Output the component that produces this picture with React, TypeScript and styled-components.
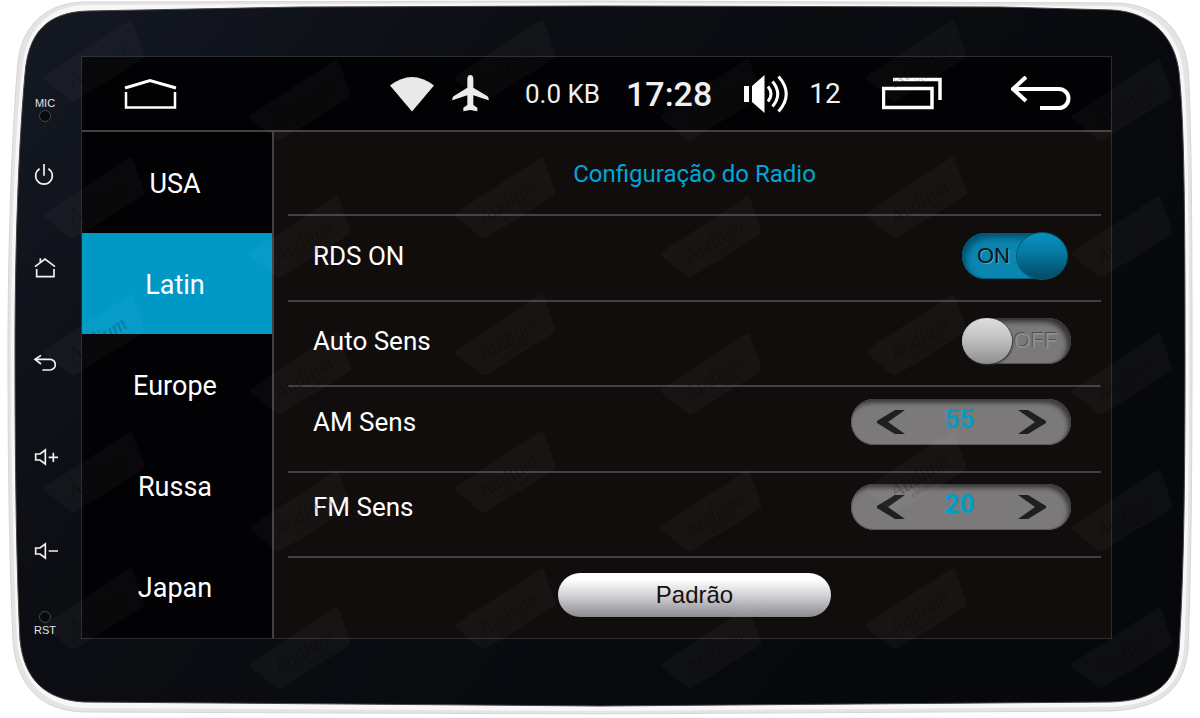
import React, { useState } from "react";
import styled, { createGlobalStyle, css } from "styled-components";

const GlobalStyle = createGlobalStyle`
  *, *::before, *::after { box-sizing: border-box; }
  body { margin: 0; background: #fff; }
  button { font: inherit; color: inherit; border: 0; background: none; padding: 0; margin: 0; cursor: pointer; }
`;

const ui = `Roboto, "Open Sans", sans-serif`;
const arial = `"Liberation Sans", Arial, sans-serif`;
const line = "#3f4241";
const cyan = "#0099c6";

const Device = styled.div`
  position: relative;
  display: flex;
  min-height: 100vh;
  padding: 57px 89px 80px 0;
  font-family: ${ui};
  color: #fff;
`;

const Bezel = styled.svg`
  position: absolute;
  inset: 0;
  width: 100%;
  height: 100%;
`;

const Watermark = styled.svg`
  position: absolute;
  inset: 0;
  width: 100%;
  height: 100%;
  pointer-events: none;
`;

const HardwareKeys = styled.aside`
  position: relative;
  flex: 0 0 82px;
  display: flex;
  flex-direction: column;
  align-items: center;
  padding: 40px 0 2px 8px;
`;

const KeyStack = styled.div`
  flex: 1;
  display: flex;
  flex-direction: column;
  justify-content: space-between;
  margin: 38px 0 46px;
`;

const HardwareKey = styled.button`
  display: grid;
  place-items: center;
  width: 28px;
  height: 28px;
`;

const Port = styled.div`
  display: flex;
  flex-direction: column;
  align-items: center;
  gap: 1px;
  font: 11px/12px ${arial};
  color: #e4e4e4;
`;

const Hole = styled.i`
  width: 12px;
  height: 12px;
  border-radius: 50%;
  background: #08090b;
  border: 1px solid #43464a;
`;

const Screen = styled.div`
  position: relative;
  flex: 1;
  display: flex;
  flex-direction: column;
  background: #020103;
  box-shadow: 0 0 0 1px #2b2d30;
`;

const StatusBar = styled.header`
  display: flex;
  align-items: center;
  height: 75px;
  padding: 0 40px 0 42px;
  border-bottom: 2px solid ${line};
`;

const StatusGroup = styled.div`
  display: flex;
  align-items: center;
  margin-left: auto;
`;

const BarButton = styled.button<{ $gap?: number }>`
  display: flex;
  margin-left: ${(p) => p.$gap ?? 0}px;
`;

const BarIcon = styled.svg<{ $gap?: number }>`
  display: block;
  flex: none;
  margin-left: ${(p) => p.$gap ?? 0}px;
`;

const BarText = styled.span<{ $size: number; $width: number; $gap: number; $weight?: number }>`
  margin-left: ${(p) => p.$gap}px;
  width: ${(p) => p.$width}px;
  text-align: center;
  white-space: nowrap;
  font-size: ${(p) => p.$size}px;
  font-weight: ${(p) => p.$weight ?? 400};
  line-height: 36px;
  color: #f0f0f0;
`;

const Body = styled.div`
  flex: 1;
  display: flex;
`;

const Regions = styled.nav`
  flex: 0 0 192px;
  display: grid;
  grid-auto-rows: 1fr;
  border-right: 2px solid ${line};
`;

const Region = styled.button<{ $active: boolean }>`
  font-size: 27px;
  line-height: 32px;
  padding: 2px 4px 0 0;
  background: ${(p) => (p.$active ? cyan : "transparent")};
`;

const Settings = styled.main`
  flex: 1;
  display: grid;
  grid-template-rows: 84px repeat(4, 1fr) 80px;
  padding: 0 10px 0 14px;
  background: #110d0c;
`;

const Title = styled.h1`
  display: grid;
  place-items: center;
  margin: 0;
  padding-top: 2px;
  border-bottom: 2px solid ${line};
  font-size: 24px;
  font-weight: 400;
  line-height: 32px;
  color: #00a6d9;
`;

const Row = styled.div<{ $lift: number }>`
  display: flex;
  align-items: center;
  justify-content: space-between;
  padding: 0 30px ${(p) => p.$lift}px 25px;
  border-bottom: 2px solid ${line};
  font-size: 26px;
  line-height: 32px;
`;

const Track = styled.span<{ $on: boolean }>`
  position: relative;
  display: flex;
  align-items: center;
  height: 46px;
  border-radius: 23px;
  font: 22px/28px ${arial};
  ${(p) =>
    p.$on
      ? css`
          width: 105px;
          margin-right: 4px;
          padding-left: 15px;
          background: #0a86b1;
          color: #06141a;
          box-shadow: inset 4px 5px 6px #035270, inset 0 0 0 1px #07607f;
          text-shadow: 1px 1px 0 #4aa9c8;
        `
      : css`
          width: 109px;
          padding-left: 52px;
          background: #7b7979;
          color: #8f8d8d;
          box-shadow: inset -4px 4px 5px #353333, inset 0 0 0 1px #555;
          text-shadow: -1px -1px 0 #525050;
        `}
`;

const SwitchInput = styled.input`
  appearance: none;
  position: absolute;
  inset: 0;
  margin: 0;
  border-radius: 23px;
  cursor: pointer;

  &::after {
    content: "";
    position: absolute;
    top: 0;
    left: 0;
    width: 50px;
    height: 46px;
    border-radius: 50%;
    background: linear-gradient(#dedede, #c2c1c2 45%, #8e8d90);
    box-shadow: 1px 1px 2px #333;
  }
  &:checked::after {
    left: auto;
    right: 0;
    background: linear-gradient(#0793c0, #0578a0 45%, #034a62);
    box-shadow: 0 0 0 1px #055672;
  }
`;

const Stepper = styled.div`
  display: flex;
  align-items: center;
  justify-content: space-between;
  width: 220px;
  height: 46px;
  padding: 0 25px 0 26px;
  border-radius: 23px;
  background: #7b7979;
  box-shadow: inset -3px 4px 4px #3d3b3b, inset 0 0 0 1px #5c5a5a;
`;

const StepButton = styled.button`
  display: flex;
`;

const Value = styled.output`
  padding: 0 4px 6px 0;
  font-size: 26px;
  font-weight: 700;
  line-height: 30px;
  color: #009dc8;
`;

const Footer = styled.div`
  display: flex;
  justify-content: center;
  padding-top: 15px;
`;

const DefaultButton = styled.button`
  width: 273px;
  height: 44px;
  border-radius: 22px;
  background: linear-gradient(#fff 15%, #d4d3d6 50%, #8b8a8f);
  font: 24px/28px ${arial};
  color: #151112;
`;

const keyStroke = { fill: "none", stroke: "#f2f2f2", strokeWidth: 5 };

const hardware = [
  { label: "Power", box: "96 488 78 78", d: "M119 511a25 25 0 1 0 26 0M132 497V532" },
  { label: "Home", box: "96 45 78 78", d: "M105 80L135 57L165 80M121 68V55M110 87V110H162V87" },
  { label: "Back", box: "96 324 78 78", d: "M123 340L105 352L123 366M105 352H150a16 16 0 0 1 0 32H127" },
  { label: "Volume up", box: "96 616 78 78", d: "M107 646H120L136 634V676L120 664H107ZM146 656H174M160 642V670" },
  { label: "Volume down", box: "96 171 78 78", d: "M107 201H120L136 189V231L120 219H107ZM146 210H174" },
];

function BezelDrawing() {
  return (
    <Bezel viewBox="0 0 1200 718" preserveAspectRatio="none" aria-hidden="true">
      <defs>
        <linearGradient id="face" x1="0" x2="1" y1="0" y2="0.5">
          <stop offset="0" stopColor="#141924" />
          <stop offset="0.35" stopColor="#0c0e13" />
          <stop offset="1" stopColor="#07080c" />
        </linearGradient>
      </defs>
      <path
        d="M18 62C21 30 42 3 84 2L600 1L1116 3C1158 4 1184 30 1188 68C1191 110 1192 200 1192 350C1192 480 1191 570 1188 650C1184 690 1160 709 1110 711L600 714L84 712C40 711 16 685 13 640C9 560 8 450 8 350C8 240 12 130 18 62Z"
        fill="#e4e4e5"
        stroke="#d6d6d7"
        strokeWidth="1"
      />
      <path
        d="M22 70C25 32 46 6 86 5L600 3L1114 6C1152 7 1179 34 1183 70C1188 110 1189 200 1189 350C1189 480 1188 570 1184 650C1180 688 1156 705 1110 707L600 711L84 708C45 707 20 680 17 640C13 560 11 450 11 350C11 240 15 130 22 70Z"
        fill="#f7f7f7"
      />
      <path
        d="M25 74C28 34 46 12 88 11L300 7L600 6L1000 7L1112 10C1152 12 1175 38 1179 72C1184 120 1185 200 1185 350C1185 480 1184 570 1179 650C1175 684 1154 701 1110 702L600 706L84 702C46 700 24 680 20 640C16 560 15 450 15 350C15 240 19 140 25 74Z"
        fill="url(#face)"
        stroke="#4b4443"
        strokeWidth="1"
      />
    </Bezel>
  );
}

function WatermarkTag({ x, y }: { x: number; y: number }) {
  return (
    <g transform={`translate(${x} ${y})`}>
      <path d="M1 57L85 2Q88 0 89 4L100 35Q101 38 98 40L32 81Q29 83 26 81L1 61Q-1 59 1 57Z" fill="#fff" fillOpacity="0.028" />
      <g
        transform="translate(29 69) rotate(-32)"
        fill="#000"
        fillOpacity="0.22"
        fontFamily="Liberation Serif, serif"
        fontStyle="italic"
      >
        <text fontSize="21">Audium</text>
        <text x="16" y="9" fontSize="9">electronics</text>
      </g>
    </g>
  );
}

function WatermarkLayer() {
  return (
    <Watermark aria-hidden="true">
      <defs>
        <pattern id="tags" x="40" y="16" width="411" height="137" patternUnits="userSpaceOnUse">
          <WatermarkTag x={4} y={3} />
          <WatermarkTag x={210} y={42} />
        </pattern>
      </defs>
      <rect x="40" y="16" width="96%" height="95%" fill="url(#tags)" />
    </Watermark>
  );
}

function Toggle({ id, initial }: { id: string; initial: boolean }) {
  const [on, setOn] = useState(initial);
  return (
    <Track $on={on}>
      <span aria-hidden="true">{on ? "ON" : "OFF"}</span>
      <SwitchInput id={id} type="checkbox" role="switch" checked={on} onChange={(e) => setOn(e.target.checked)} />
    </Track>
  );
}

function SensStepper({ label, initial }: { label: string; initial: number }) {
  const [value, setValue] = useState(initial);
  return (
    <Stepper role="group" aria-label={label}>
      <StepButton aria-label={`${label} -`} onClick={() => setValue(value - 1)}>
        <svg width="28" height="24" viewBox="0 0 28 24" fill="#1f1f20">
          <path d="M18 0H28L11 12L28 24H18L0 13V11Z" />
        </svg>
      </StepButton>
      <Value>{value}</Value>
      <StepButton aria-label={`${label} +`} onClick={() => setValue(value + 1)}>
        <svg width="28" height="24" viewBox="0 0 28 24" fill="#1f1f20">
          <path d="M10 0H0L17 12L0 24H10L28 13V11Z" />
        </svg>
      </StepButton>
    </Stepper>
  );
}

const regions = ["USA", "Latin", "Europe", "Russa", "Japan"];

export default function App() {
  const [region, setRegion] = useState("Latin");
  return (
    <>
      <GlobalStyle />
      <Device>
        <BezelDrawing />
        <HardwareKeys>
          <Port>
            <span>MIC</span>
            <Hole />
          </Port>
          <KeyStack>
            {hardware.map((k) => (
              <HardwareKey key={k.label} aria-label={k.label}>
                <svg width="26" height="26" viewBox={k.box} {...keyStroke}>
                  <path d={k.d} />
                </svg>
              </HardwareKey>
            ))}
          </KeyStack>
          <Port>
            <Hole />
            <span>RST</span>
          </Port>
        </HardwareKeys>

        <Screen>
          <StatusBar>
            <BarButton aria-label="Home">
              <BarIcon width="53" height="33" viewBox="0 0 53 33" fill="none" stroke="#fff" strokeWidth="3">
                <path d="M1 11L26 3.500L52 11" />
                <path d="M2 15V30.500H51V15" strokeWidth="2.500" />
              </BarIcon>
            </BarButton>
            <StatusGroup>
              <BarIcon width="44" height="36" viewBox="0 0 44 36" fill="#e9e9e9">
                <path d="M0 9.500Q22 -7.500 44 9.500L22 35.500Z" />
              </BarIcon>
              <BarIcon $gap={18} width="37" height="37" viewBox="0 0 111 111" fill="#ececec">
                <path d="M55 0c6 0 9 5 9 12V38L104 62c5 3 7 8 6 14L64 61V90L76 98V109L55 105L34 109V98L46 90V61L1 76c-1-6 1-11 6-14L46 38V12c0-7 3-12 9-12z" />
              </BarIcon>
              <BarText $size={26} $width={74} $gap={36}>0.0 KB</BarText>
              <BarText $size={34} $width={86} $gap={27} $weight={500}>17:28</BarText>
              <BarIcon $gap={32} width="46" height="38" viewBox="0 0 46 38" fill="none" stroke="#fff" strokeWidth="3">
                <path d="M0 11h5v16H0zM8 11L20.500 0V38L8 27Z" fill="#fff" stroke="none" />
                <path d="M24 11.500Q30 19 24 26.500M28.500 6.500Q39 19 28.500 31.500M34.500 1.500Q50 19 34.500 36.500" />
              </BarIcon>
              <BarText $size={28} $width={32} $gap={19}>12</BarText>
              <BarButton $gap={41} aria-label="Recent apps">
                <BarIcon width="60" height="33" viewBox="0 0 60 33" fill="none" stroke="#fff" strokeWidth="3.500">
                  <path d="M1.500 11.500H50V30.500H1.500ZM11 2.500H58V23" />
                </BarIcon>
              </BarButton>
              <BarButton $gap={69} aria-label="Back">
                <BarIcon width="60" height="35" viewBox="0 0 60 35" fill="none" stroke="#fff" strokeWidth="4">
                  <path d="M15 1L2 13L15 25M3 13H48a9.500 9.500 0 0 1 0 19H29" />
                </BarIcon>
              </BarButton>
            </StatusGroup>
          </StatusBar>

          <Body>
            <Regions>
              {regions.map((r) => (
                <Region key={r} $active={r === region} onClick={() => setRegion(r)}>
                  {r}
                </Region>
              ))}
            </Regions>
            <Settings>
              <Title>Configuração do Radio</Title>
              <Row $lift={4}>
                <label htmlFor="rds">RDS ON</label>
                <Toggle id="rds" initial={true} />
              </Row>
              <Row $lift={4}>
                <label htmlFor="auto">Auto Sens</label>
                <Toggle id="auto" initial={false} />
              </Row>
              <Row $lift={14}>
                <span>AM Sens</span>
                <SensStepper label="AM Sens" initial={55} />
              </Row>
              <Row $lift={14}>
                <span>FM Sens</span>
                <SensStepper label="FM Sens" initial={20} />
              </Row>
              <Footer>
                <DefaultButton>Padrão</DefaultButton>
              </Footer>
            </Settings>
          </Body>
        </Screen>
        <WatermarkLayer />
      </Device>
    </>
  );
}
